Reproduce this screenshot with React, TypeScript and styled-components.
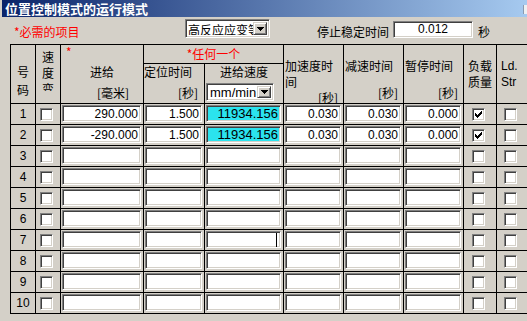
import styled, { createGlobalStyle, css } from "styled-components";

interface IRow {
  feed: string;
  time: string;
  speed: string;
  acc: string;
  dec: string;
  dwell: string;
  load: boolean;
  caret?: boolean;
}

const filled = (feed: string): IRow => ({
  feed,
  time: "1.500",
  speed: "11934.156",
  acc: "0.030",
  dec: "0.030",
  dwell: "0.000",
  load: true,
});

const rows: IRow[] = Array.from({ length: 10 }, (_, i) => {
  if (i === 0) return filled("290.000");
  if (i === 1) return filled("-290.000");
  return {
    feed: "",
    time: "",
    speed: "",
    acc: "",
    dec: "",
    dwell: "",
    load: false,
    caret: i === 6,
  };
});

const GlobalStyle = createGlobalStyle`
  html, body {
    margin: 0;
    padding: 0;
    background: #d4d0c8;
  }
  body {
    font-family: "Noto Sans CJK SC", "Liberation Sans", sans-serif;
    font-size: 12px;
    color: #000;
  }
`;

const sunken = css`
  box-sizing: border-box;
  border: 1px solid;
  border-color: #808080 #ffffff #ffffff #808080;
  box-shadow: inset 1px 1px 0 #404040, inset -1px -1px 0 #d4d0c8;
`;

const Window = styled.div`
  width: 527px;
  height: 321px;
  overflow: hidden;
  background: #d4d0c8;
  padding-left: 2px;
  box-sizing: border-box;
`;

const TitleBar = styled.div`
  height: 17px;
  display: flex;
  align-items: center;
  justify-content: space-between;
  padding-left: 3px;
  overflow: hidden;
  background: linear-gradient(to right, #0a246a, #a6caf0);
  color: #fff;
  font-weight: bold;
  font-size: 13px;
  line-height: 17px;
`;

const TitleButton = styled.div`
  width: 14px;
  height: 9px;
  margin-right: -11px;
  margin-top: 2px;
  background: #eef0f2;
  border-left: 1px solid #8a9ab0;
`;

const OptionBar = styled.div`
  height: 27px;
  display: flex;
  align-items: flex-start;
  padding: 2px 0 0 12px;
  box-sizing: border-box;
`;

const BarText = styled.div<{ $red?: boolean; $width?: number; $gap?: number }>`
  color: ${(p) => (p.$red ? "#ff0000" : "#000")};
  width: ${(p) => (p.$width ? `${p.$width}px` : "auto")};
  margin: 5px 0 0 ${(p) => p.$gap ?? 0}px;
  line-height: 16px;
  white-space: nowrap;
`;

const Select = styled.div<{ $width: number; $height: number }>`
  ${sunken};
  width: ${(p) => p.$width}px;
  height: ${(p) => p.$height}px;
  background: #fff;
  display: flex;
  align-items: stretch;
  padding: 2px;
  flex-shrink: 0;
`;

const SelectText = styled.div<{ $latin?: boolean }>`
  flex: 1;
  overflow: hidden;
  white-space: nowrap;
  padding-left: ${(p) => (p.$latin ? 1 : 0)}px;
  font-family: ${(p) =>
    p.$latin ? `"Liberation Sans", sans-serif` : `"Noto Sans CJK SC", sans-serif`};
  font-size: ${(p) => (p.$latin ? 13 : 12)}px;
  line-height: ${(p) => (p.$latin ? 14 : 15)}px;
`;

const SelectButton = styled.div`
  width: 14px;
  flex-shrink: 0;
  box-sizing: border-box;
  background: #d4d0c8;
  border: 1px solid;
  border-color: #d4d0c8 #404040 #404040 #d4d0c8;
  box-shadow: inset 1px 1px 0 #fff, inset -1px -1px 0 #808080;
  display: flex;
  align-items: center;
  justify-content: center;
`;

const StopField = styled.div`
  ${sunken};
  width: 80px;
  height: 17px;
  margin: 2px 0 0 4px;
  background: #fff;
  text-align: center;
  font-family: "Liberation Sans", sans-serif;
  font-size: 12px;
  line-height: 14px;
`;

const Table = styled.div`
  margin-left: 8px;
  display: grid;
  grid-template-columns: 24px 24px 82px 60px 78px 59px 59px 59px 32px 30px;
  grid-template-rows: 18px 39px repeat(10, 20px);
  gap: 1px;
  padding: 1px 0 1px 1px;
  background: #000;
  width: max-content;
`;

const HeadCell = styled.div<{
  $rows?: number;
  $cols?: number;
  $top?: number;
  $bottom?: number;
  $end?: boolean;
}>`
  grid-row: span ${(p) => p.$rows ?? 1};
  grid-column: span ${(p) => p.$cols ?? 1};
  background: #d4d0c8;
  display: flex;
  flex-direction: column;
  justify-content: ${(p) => (p.$end ? "flex-end" : "flex-start")};
  padding: ${(p) => p.$top ?? 0}px 0 ${(p) => p.$bottom ?? 2}px;
  box-sizing: border-box;
  overflow: hidden;
`;

const HeadLine = styled.div<{
  $align?: "left" | "center" | "right";
  $red?: boolean;
  $lh?: number;
  $gap?: number;
  $left?: number;
  $latin?: boolean;
}>`
  text-align: ${(p) => p.$align ?? "left"};
  color: ${(p) => (p.$red ? "#ff0000" : "#000")};
  line-height: ${(p) => p.$lh ?? 16}px;
  margin-top: ${(p) => p.$gap ?? 0}px;
  padding-left: ${(p) => p.$left ?? 0}px;
  white-space: nowrap;
  font-family: ${(p) =>
    p.$latin ? `"Liberation Sans", sans-serif` : `"Noto Sans CJK SC", sans-serif`};
`;

const UnitLine = styled.div<{ $right?: number }>`
  margin-top: auto;
  text-align: right;
  padding-right: ${(p) => p.$right ?? 5}px;
  line-height: 16px;
  white-space: nowrap;
`;

const ClipBox = styled.div`
  height: 42px;
  overflow: hidden;
  text-align: center;
  line-height: 16px;
`;

const NumCell = styled.div`
  background: #d4d0c8;
  display: flex;
  align-items: center;
  justify-content: center;
  font-family: "Liberation Sans", sans-serif;
  font-size: 12px;
`;

const BoxCell = styled.div`
  background: #d4d0c8;
  display: flex;
  align-items: center;
  justify-content: center;
  padding-right: 3px;
`;

const CheckBox = styled.div`
  ${sunken};
  width: 13px;
  height: 13px;
  background: #fff;
  display: flex;
  align-items: center;
  justify-content: center;
`;

const FieldCell = styled.div`
  background: #d4d0c8;
  padding: 1px 2px 2px 1px;
  box-sizing: border-box;
`;

const Field = styled.div<{ $cyan?: boolean }>`
  ${sunken};
  height: 17px;
  background: ${(p) => (p.$cyan ? "#2be3ee" : "#fff")};
  display: flex;
  align-items: center;
  justify-content: flex-end;
  padding-right: 2px;
  font-family: "Liberation Sans", sans-serif;
  font-size: ${(p) => (p.$cyan ? 13 : 12)}px;
  white-space: nowrap;
  overflow: hidden;
`;

const Caret = styled.span`
  width: 1px;
  height: 14px;
  background: #000;
  margin-right: 1px;
`;

const SubSelect = styled.div`
  margin: 3px 0 0 1px;
`;

const Arrow = () => (
  <svg width="7" height="4" viewBox="0 0 7 4" shapeRendering="crispEdges">
    <polygon points="0,0 7,0 3.5,4" fill="#000" />
  </svg>
);

const CheckMark = () => (
  <svg width="7" height="7" viewBox="0 0 7 7" shapeRendering="crispEdges">
    {[2, 3, 4, 3, 2, 1, 0].map((y, x) => (
      <rect key={x} x={x} y={y} width="1" height="3" fill="#000" />
    ))}
  </svg>
);

function App() {
  return (
    <Window>
      <GlobalStyle />
      <TitleBar>
        <span>位置控制模式的运行模式</span>
        <TitleButton />
      </TitleBar>
      <OptionBar>
        <BarText $red $width={171}>
          *必需的项目
        </BarText>
        <Select $width={85} $height={19}>
          <SelectText>高反应应变等级</SelectText>
          <SelectButton>
            <Arrow />
          </SelectButton>
        </Select>
        <BarText $gap={47}>停止稳定时间</BarText>
        <StopField>0.012</StopField>
        <BarText $gap={5}>秒</BarText>
      </OptionBar>
      <Table>
        <HeadCell $rows={2} $end $bottom={4}>
          <HeadLine $align="center" $lh={18}>号</HeadLine>
          <HeadLine $align="center" $lh={18}>码</HeadLine>
        </HeadCell>
        <HeadCell $rows={2} $top={4}>
          <ClipBox>
            速<br />度<br />变<br />更
          </ClipBox>
        </HeadCell>
        <HeadCell $rows={2}>
          <HeadLine $red $lh={14} $left={5}>*</HeadLine>
          <HeadLine $align="center" $gap={5}>进给</HeadLine>
          <UnitLine $right={14}>[毫米]</UnitLine>
        </HeadCell>
        <HeadCell $cols={2}>
          <HeadLine $align="center" $red $lh={18}>*任何一个</HeadLine>
        </HeadCell>
        <HeadCell $rows={2} $top={13}>
          <HeadLine $left={1}>加速度时</HeadLine>
          <HeadLine $left={1}>间</HeadLine>
          <UnitLine>[秒]</UnitLine>
        </HeadCell>
        <HeadCell $rows={2} $top={13}>
          <HeadLine $left={1}>减速时间</HeadLine>
          <UnitLine>[秒]</UnitLine>
        </HeadCell>
        <HeadCell $rows={2} $top={13}>
          <HeadLine $left={1}>暂停时间</HeadLine>
          <UnitLine>[秒]</UnitLine>
        </HeadCell>
        <HeadCell $rows={2} $top={13}>
          <HeadLine $align="center">负载</HeadLine>
          <HeadLine $align="center">质量</HeadLine>
        </HeadCell>
        <HeadCell $rows={2} $top={13}>
          <HeadLine $left={4} $latin>Ld.</HeadLine>
          <HeadLine $left={4} $latin>Str</HeadLine>
        </HeadCell>
        <HeadCell>
          <HeadLine>定位时间</HeadLine>
          <UnitLine $right={6}>[秒]</UnitLine>
        </HeadCell>
        <HeadCell>
          <HeadLine $align="center">进给速度</HeadLine>
          <SubSelect>
            <Select $width={68} $height={18}>
              <SelectText $latin>mm/min</SelectText>
              <SelectButton>
                <Arrow />
              </SelectButton>
            </Select>
          </SubSelect>
        </HeadCell>

        {rows.map((r, i) => [
          <NumCell key={`n${i}`}>{i + 1}</NumCell>,
          <BoxCell key={`v${i}`}>
            <CheckBox />
          </BoxCell>,
          <FieldCell key={`f${i}`}>
            <Field>{r.feed}</Field>
          </FieldCell>,
          <FieldCell key={`t${i}`}>
            <Field>{r.time}</Field>
          </FieldCell>,
          <FieldCell key={`s${i}`}>
            <Field $cyan={r.speed !== ""}>
              {r.speed}
              {r.caret && <Caret />}
            </Field>
          </FieldCell>,
          <FieldCell key={`a${i}`}>
            <Field>{r.acc}</Field>
          </FieldCell>,
          <FieldCell key={`d${i}`}>
            <Field>{r.dec}</Field>
          </FieldCell>,
          <FieldCell key={`w${i}`}>
            <Field>{r.dwell}</Field>
          </FieldCell>,
          <BoxCell key={`l${i}`}>
            <CheckBox>{r.load && <CheckMark />}</CheckBox>
          </BoxCell>,
          <BoxCell key={`x${i}`}>
            <CheckBox />
          </BoxCell>,
        ])}
      </Table>
    </Window>
  );
}

export default App;
